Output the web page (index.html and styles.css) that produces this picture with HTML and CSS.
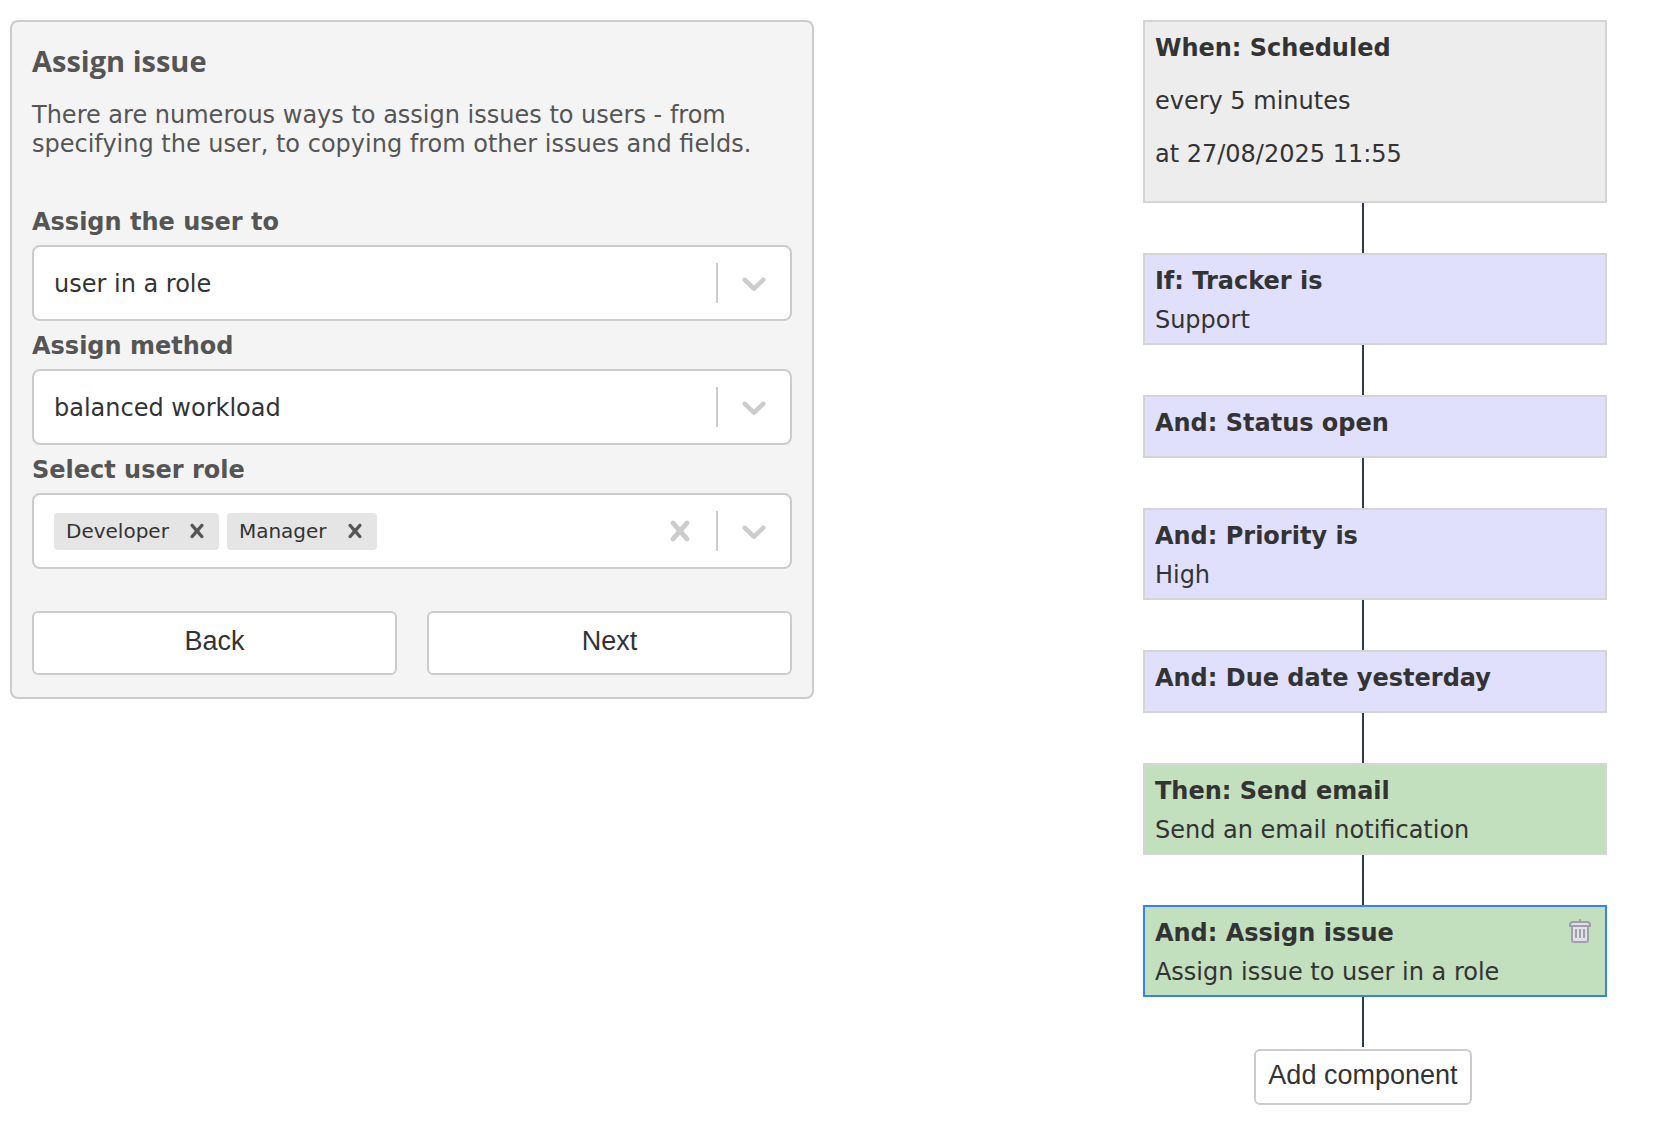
FILE: index.html
```html
<!DOCTYPE html>
<html lang="en">
<head>
  <meta charset="UTF-8">
  <meta name="viewport" content="width=device-width, initial-scale=1">
  <title>Assign issue</title>
  <link rel="stylesheet" href="styles.css">
</head>
<body>
  <main class="editor">
    <form class="panel">
      <h2>Assign issue</h2>
      <p class="description">There are numerous ways to assign issues to users - from specifying the user, to copying from other issues and fields.</p>

      <label class="field-label" for="assign-to">Assign the user to</label>
      <div class="control">
        <select id="assign-to">
          <option>user in a role</option>
        </select>
        <span class="separator"></span>
        <svg class="chevron" viewBox="0 0 20 20" aria-hidden="true"><path d="M4.516 7.548c0.436-0.446 1.043-0.481 1.576 0l3.908 3.747 3.908-3.747c0.533-0.481 1.141-0.446 1.574 0 0.436 0.445 0.408 1.197 0 1.615-0.406 0.418-4.695 4.502-4.695 4.502-0.217 0.223-0.502 0.335-0.787 0.335s-0.57-0.112-0.789-0.335c0 0-4.287-4.084-4.695-4.502s-0.436-1.17 0-1.615z"/></svg>
      </div>

      <label class="field-label" for="assign-method">Assign method</label>
      <div class="control">
        <select id="assign-method">
          <option>balanced workload</option>
        </select>
        <span class="separator"></span>
        <svg class="chevron" viewBox="0 0 20 20" aria-hidden="true"><path d="M4.516 7.548c0.436-0.446 1.043-0.481 1.576 0l3.908 3.747 3.908-3.747c0.533-0.481 1.141-0.446 1.574 0 0.436 0.445 0.408 1.197 0 1.615-0.406 0.418-4.695 4.502-4.695 4.502-0.217 0.223-0.502 0.335-0.787 0.335s-0.57-0.112-0.789-0.335c0 0-4.287-4.084-4.695-4.502s-0.436-1.17 0-1.615z"/></svg>
      </div>

      <label class="field-label" for="user-role">Select user role</label>
      <div class="control">
        <div class="values">
          <span class="chip">Developer
            <button type="button" class="chip-remove" aria-label="Remove Developer">
              <svg viewBox="0 0 20 20"><path d="M14.348 14.849c-0.469 0.469-1.229 0.469-1.697 0l-2.651-3.030-2.651 3.029c-0.469 0.469-1.229 0.469-1.697 0-0.469-0.469-0.469-1.229 0-1.697l2.758-3.15-2.759-3.152c-0.469-0.469-0.469-1.228 0-1.697s1.228-0.469 1.697 0l2.652 3.031 2.651-3.031c0.469-0.469 1.228-0.469 1.697 0s0.469 1.229 0 1.697l-2.758 3.152 2.758 3.15c0.469 0.469 0.469 1.229 0 1.698z"/></svg>
            </button>
          </span>
          <span class="chip">Manager
            <button type="button" class="chip-remove" aria-label="Remove Manager">
              <svg viewBox="0 0 20 20"><path d="M14.348 14.849c-0.469 0.469-1.229 0.469-1.697 0l-2.651-3.030-2.651 3.029c-0.469 0.469-1.229 0.469-1.697 0-0.469-0.469-0.469-1.229 0-1.697l2.758-3.15-2.759-3.152c-0.469-0.469-0.469-1.228 0-1.697s1.228-0.469 1.697 0l2.652 3.031 2.651-3.031c0.469-0.469 1.228-0.469 1.697 0s0.469 1.229 0 1.697l-2.758 3.152 2.758 3.15c0.469 0.469 0.469 1.229 0 1.698z"/></svg>
            </button>
          </span>
          <input type="text" id="user-role" role="combobox" aria-expanded="false" autocomplete="off">
        </div>
        <button type="button" class="indicator" aria-label="Clear all">
          <svg viewBox="0 0 20 20"><path d="M14.348 14.849c-0.469 0.469-1.229 0.469-1.697 0l-2.651-3.030-2.651 3.029c-0.469 0.469-1.229 0.469-1.697 0-0.469-0.469-0.469-1.229 0-1.697l2.758-3.15-2.759-3.152c-0.469-0.469-0.469-1.228 0-1.697s1.228-0.469 1.697 0l2.652 3.031 2.651-3.031c0.469-0.469 1.228-0.469 1.697 0s0.469 1.229 0 1.697l-2.758 3.152 2.758 3.15c0.469 0.469 0.469 1.229 0 1.698z"/></svg>
        </button>
        <span class="separator"></span>
        <button type="button" class="indicator" aria-label="Show roles">
          <svg viewBox="0 0 20 20"><path d="M4.516 7.548c0.436-0.446 1.043-0.481 1.576 0l3.908 3.747 3.908-3.747c0.533-0.481 1.141-0.446 1.574 0 0.436 0.445 0.408 1.197 0 1.615-0.406 0.418-4.695 4.502-4.695 4.502-0.217 0.223-0.502 0.335-0.787 0.335s-0.57-0.112-0.789-0.335c0 0-4.287-4.084-4.695-4.502s-0.436-1.17 0-1.615z"/></svg>
        </button>
      </div>

      <div class="buttons">
        <button type="button" class="button">Back</button>
        <button type="button" class="button">Next</button>
      </div>
    </form>

    <div class="flow">
      <div class="node trigger">
        <h3>When: Scheduled</h3>
        <p>every 5 minutes</p>
        <p>at 27/08/2025 11:55</p>
      </div>
      <div class="line"></div>
      <div class="node condition">
        <h3>If: Tracker is</h3>
        <div>Support</div>
      </div>
      <div class="line"></div>
      <div class="node condition">
        <h3>And: Status open</h3>
      </div>
      <div class="line"></div>
      <div class="node condition">
        <h3>And: Priority is</h3>
        <div>High</div>
      </div>
      <div class="line"></div>
      <div class="node condition">
        <h3>And: Due date yesterday</h3>
      </div>
      <div class="line"></div>
      <div class="node action">
        <h3>Then: Send email</h3>
        <div>Send an email notification</div>
      </div>
      <div class="line"></div>
      <div class="node action selected">
        <h3>And: Assign issue
          <button type="button" class="delete" aria-label="Delete component">
            <svg viewBox="0 0 24 24">
              <path class="bin" d="M4 8h16v14q0 1-1 1H5q-1 0-1-1z"/>
              <path class="lid" d="M1 6q0-3 3-3h16q3 0 3 3v1H1z"/>
              <path class="edge" d="M12 0v3M1 7h22M4 8v13q0 2 2 2h12q2 0 2-2V8M2 6q0-3 3-3h14q3 0 3 3"/>
              <path class="edge" d="M8 10v9M12 10v9M16 10v9"/>
            </svg>
          </button>
        </h3>
        <div>Assign issue to user in a role</div>
      </div>
      <div class="line"></div>
      <button type="button" class="button add">Add component</button>
    </div>
  </main>
</body>
</html>
```

FILE: styles.css
```css
* {
  box-sizing: border-box;
}

body {
  margin: 0;
  padding: 20px 10px;
  font-family: Verdana, "DejaVu Sans", sans-serif;
  font-size: 24px;
  line-height: 29px;
  color: #333;
  background-color: #fff;
}

.editor {
  display: grid;
  grid-template-columns: 48.5% 36.8%;
  justify-content: space-between;
  align-items: start;
}

/* Settings panel */
.panel {
  padding: 20px 20px 22px;
  border: 2px solid #ccc;
  border-radius: 8px;
  background-color: #f4f4f4;
  color: #555;
}

h2 {
  margin: 0 0 21px;
  font-family: "Trebuchet MS", "Open Sans", sans-serif;
  font-size: 29px;
  line-height: 38px;
  font-weight: 700;
}

.description {
  margin: 0 0 40px;
}

.field-label {
  display: block;
  padding: 9px 0 8px;
  font-weight: bold;
}

.control {
  display: flex;
  align-items: center;
  min-height: 76px;
  border: 2px solid #ccc;
  border-radius: 8px;
  background-color: #fff;
}

.control + .field-label {
  padding-top: 11px;
}

.control select {
  flex: 1;
  min-width: 0;
  height: 72px;
  padding: 2px 20px 0;
  border: none;
  appearance: none;
  background: none;
  font: inherit;
  color: #333;
}

.separator {
  width: 2px;
  height: 40px;
  background-color: #ccc;
}

.chevron {
  width: 40px;
  height: 40px;
  margin: 0 16px;
  fill: #ccc;
}

.indicator {
  display: flex;
  padding: 0 16px;
  border: none;
  background: none;
  cursor: pointer;
}

.indicator svg {
  width: 40px;
  height: 40px;
  fill: #ccc;
}

.values {
  display: flex;
  flex: 1;
  gap: 8px;
  min-width: 0;
  padding-left: 20px;
}

.values input {
  flex: 1;
  min-width: 0;
  padding: 0;
  border: none;
  outline: none;
  background: none;
  font: inherit;
}

.chip {
  display: flex;
  align-items: center;
  gap: 6px;
  height: 37px;
  padding-left: 12px;
  border-radius: 4px;
  background-color: #e5e5e5;
  font-size: 20px;
  color: #333;
}

.chip-remove {
  display: flex;
  padding: 0 8px;
  border: none;
  background: none;
  cursor: pointer;
}

.chip-remove svg {
  width: 28px;
  height: 28px;
  fill: #555;
}

.buttons {
  display: grid;
  grid-template-columns: 1fr 1fr;
  gap: 30px;
  margin-top: 42px;
}

.button {
  padding: 13px 12px 16px;
  border: 2px solid #ccc;
  border-radius: 6px;
  background-color: #fff;
  font-family: Arial, "Liberation Sans", sans-serif;
  font-size: 27px;
  line-height: 31px;
  color: #333;
  cursor: pointer;
}

/* Workflow */
.flow {
  display: flex;
  flex-direction: column;
  align-items: center;
}

.node {
  width: 464px;
  margin-left: 24px;
  padding: 12px 10px 8px;
  border: 2px solid #d5d5d5;
}

.node h3 {
  display: flex;
  justify-content: space-between;
  align-items: flex-start;
  margin: 0 0 10px;
  font-size: 24px;
}

.node p {
  margin: 24px 0;
}

.node h3 + p {
  margin-top: -10px;
  padding-top: 24px;
}

.trigger {
  background-color: #ededed;
}

.condition {
  background-color: #e0dffc;
}

.action {
  background-color: #c2dfbe;
}

.selected {
  border-color: #3880f6;
}

.line {
  width: 2px;
  height: 50px;
  background-color: #2e3b4e;
}

.delete {
  display: flex;
  margin-right: 3px;
  padding: 0;
  border: none;
  background: none;
  cursor: pointer;
}

.delete svg {
  width: 24px;
  height: 24px;
}

.bin,
.lid {
  fill: #e1e1ea;
}

.edge {
  fill: none;
  stroke: #9f9fae;
  stroke-width: 2;
}

.add {
  margin-top: 2px;
  padding: 9px 12px 12px;
}
```
